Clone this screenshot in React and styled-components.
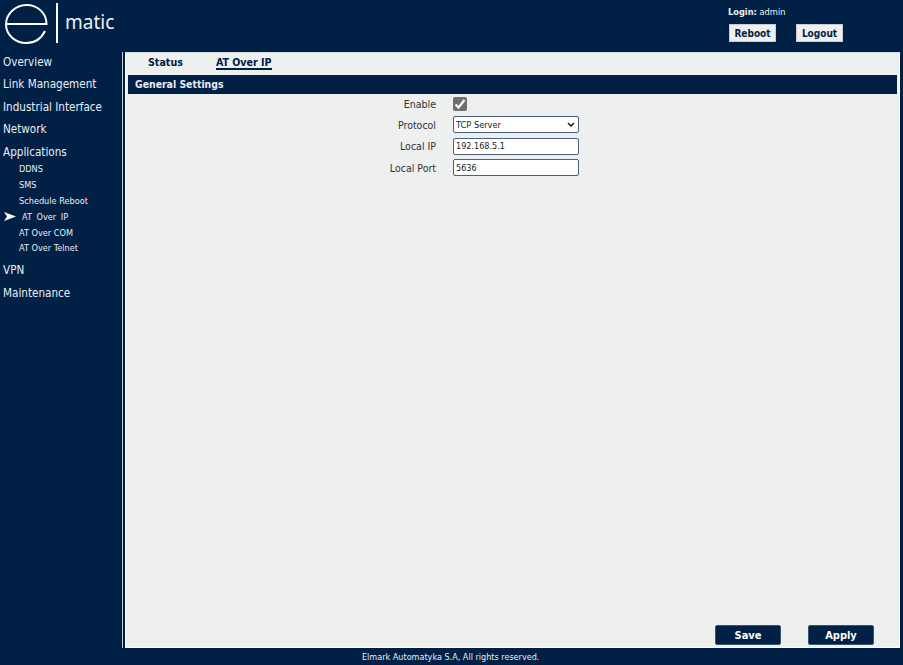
import styled, { createGlobalStyle } from "styled-components"

const Global = createGlobalStyle`
    html, body {
        margin: 0;
        padding: 0;
        height: 100%;
        background: #002145;
        font-family: "DejaVu Sans", "Noto Sans", sans-serif;
        font-stretch: condensed;
    }
    #root {
        height: 100%;
    }
`

const menuTop = ["Overview", "Link Management", "Industrial Interface", "Network", "Applications"]
const subMenu = ["DDNS", "SMS", "Schedule Reboot", "AT Over IP", "AT Over COM", "AT Over Telnet"]
const fields = [
    { label: "Local IP", value: "192.168.5.1" },
    { label: "Local Port", value: "5636" },
]
const chevron = "url(\"data:image/svg+xml,%3Csvg xmlns='http://www.w3.org/2000/svg' width='8' height='5'%3E%3Cpath d='M1 1L4 4L7 1' fill='none' stroke='%23222' stroke-width='1.6'/%3E%3C/svg%3E\")"

export default function App() {
    return (
        <Page>
            <Global />
            <Header>
                <LogoBox>
                    <svg width="58" height="46" viewBox="0 0 58 46" fill="none" stroke="#fff" strokeWidth="2">
                        <path d="M6 24H46.5C46.5 13 37.5 5 26.5 5C15.5 5 6 14 6 24.5C6 35 15.5 43 26.5 43C34 43 41 39 45 31" />
                        <path d="M57 3V43" />
                    </svg>
                    <LogoText>matic</LogoText>
                </LogoBox>
                <UserBox>
                    <LoginLine><b>Login:</b> admin</LoginLine>
                    <TopButtons>
                        <TopButton>Reboot</TopButton>
                        <TopButton>Logout</TopButton>
                    </TopButtons>
                </UserBox>
            </Header>
            <Main>
                <Sidebar>
                    {menuTop.map((m) => <MenuItem key={m}>{m}</MenuItem>)}
                    <SubList>
                        {subMenu.map((s) => (
                            <SubItem key={s} $active={s === "AT Over IP"}>
                                {s === "AT Over IP" && (
                                    <Arrow width="12" height="9" viewBox="0 0 12 9">
                                        <path d="M0 0L12 4.5L0 9L3 4.5Z" fill="#fff" />
                                    </Arrow>
                                )}
                                {s}
                            </SubItem>
                        ))}
                    </SubList>
                    <MenuItem>VPN</MenuItem>
                    <MenuItem>Maintenance</MenuItem>
                </Sidebar>
                <Panel>
                    <Tabs>
                        <Tab>Status</Tab>
                        <Tab $active>AT Over IP</Tab>
                    </Tabs>
                    <SectionBar>General Settings</SectionBar>
                    <Form>
                        <Row>
                            <Label>Enable</Label>
                            <CheckBox>
                                <svg width="14" height="14" viewBox="0 0 14 14" fill="none" stroke="#fff" strokeWidth="2.2">
                                    <path d="M2.5 7.5L5.5 10.5L11.5 3" />
                                </svg>
                            </CheckBox>
                        </Row>
                        <Row>
                            <Label>Protocol</Label>
                            <Select defaultValue="TCP Server">
                                <option>TCP Server</option>
                                <option>TCP Client</option>
                                <option>UDP</option>
                            </Select>
                        </Row>
                        {fields.map((f) => (
                            <Row key={f.label}>
                                <Label>{f.label}</Label>
                                <Input defaultValue={f.value} />
                            </Row>
                        ))}
                    </Form>
                    <Actions>
                        <ActionButton>Save</ActionButton>
                        <ActionButton>Apply</ActionButton>
                    </Actions>
                </Panel>
            </Main>
            <Footer>Elmark Automatyka S.A, All rights reserved.</Footer>
        </Page>
    )
}

const Page = styled.div`
    width: 903px;
    height: 665px;
    display: flex;
    flex-direction: column;
    background: #002145;
    overflow: hidden;
`
const Header = styled.div`
    height: 52px;
    flex: none;
    display: flex;
    justify-content: space-between;
`
const LogoBox = styled.div`
    display: flex;
    align-items: flex-start;
    svg {
        flex: none;
    }
`
const LogoText = styled.div`
    margin: 8px 0 0 7px;
    color: #eef1f4;
    font-family: "Noto Sans", sans-serif;
    font-size: 19px;
    line-height: 28px;
`
const UserBox = styled.div`
    width: 175px;
    color: #eef1f4;
    font-size: 9.2px;
`
const LoginLine = styled.div`
    margin-top: 5px;
    line-height: 13px;
    b {
        font-weight: 700;
    }
`
const TopButtons = styled.div`
    display: flex;
    gap: 20px;
    margin-top: 6px;
    margin-left: 1px;
`
const TopButton = styled.button`
    width: 47px;
    height: 18px;
    padding: 0;
    border: 1px solid #c8ccd2;
    background: #f0f0f0;
    color: #002145;
    font-family: inherit;
    font-stretch: condensed;
    font-size: 10px;
    font-weight: 700;
    cursor: pointer;
`
const Main = styled.div`
    flex: 1;
    display: flex;
    min-height: 0;
`
const Sidebar = styled.div`
    width: 123px;
    flex: none;
    box-sizing: border-box;
    padding-left: 3px;
    border-right: 1px solid #c5ccd6;
`
const MenuItem = styled.div`
    height: 22.4px;
    line-height: 20px;
    color: #e9edf2;
    font-size: 11.6px;
`
const SubList = styled.div`
    margin: -3px 0 4px;
`
const SubItem = styled.div`
    position: relative;
    height: 15.9px;
    line-height: 16px;
    padding-left: ${(p) => (p.$active ? "19px" : "16px")};
    color: #e9edf2;
    font-size: 9.1px;
    word-spacing: ${(p) => (p.$active ? "2px" : "0")};
`
const Arrow = styled.svg`
    position: absolute;
    left: 1px;
    top: 3px;
`
const Panel = styled.div`
    width: 775px;
    margin-left: 2px;
    box-sizing: border-box;
    padding: 0 2px;
    display: flex;
    flex-direction: column;
    background: #eeefef;
    border: 1px solid #fff;
    border-top-color: #d5d9de;
`
const Tabs = styled.div`
    height: 22px;
    flex: none;
    display: flex;
    gap: 33px;
    padding-left: 20px;
`
const Tab = styled.div`
    height: 13px;
    margin-top: 2px;
    line-height: 15px;
    color: #002145;
    font-size: 10.6px;
    font-weight: 700;
    border-bottom: ${(p) => (p.$active ? "2px solid #002145" : "none")};
`
const SectionBar = styled.div`
    height: 19px;
    flex: none;
    box-sizing: border-box;
    padding-left: 7px;
    line-height: 19px;
    background: #002145;
    color: #e9edf2;
    font-size: 10.4px;
    font-weight: 700;
`
const Form = styled.div`
    flex: 1;
    margin-top: -1px;
`
const Row = styled.div`
    height: 21.3px;
    display: flex;
    align-items: center;
    gap: 17px;
`
const Label = styled.div`
    width: 308px;
    text-align: right;
    color: #333;
    font-size: 10.5px;
`
const CheckBox = styled.div`
    width: 14px;
    height: 14px;
    border-radius: 2px;
    background: #6f6f6f;
    svg {
        display: block;
    }
`
const Select = styled.select`
    appearance: none;
    width: 126px;
    height: 17px;
    box-sizing: border-box;
    padding: 0 2px;
    border: 1px solid #4c6078;
    border-radius: 2px;
    background: #fff ${chevron} no-repeat right 3px center;
    color: #222;
    font-family: inherit;
    font-stretch: condensed;
    font-size: 9.2px;
`
const Input = styled.input`
    width: 126px;
    height: 17px;
    box-sizing: border-box;
    padding: 0 2px;
    border: 1px solid #4c6078;
    border-radius: 2px;
    background: #fff;
    color: #222;
    font-family: inherit;
    font-stretch: condensed;
    font-size: 9px;
`
const Actions = styled.div`
    display: flex;
    justify-content: flex-end;
    gap: 27px;
    padding: 0 23px 2px 0;
`
const ActionButton = styled.button`
    width: 66px;
    height: 20px;
    padding: 0;
    border: 1px solid #3d5470;
    border-radius: 2px;
    background: #002145;
    color: #fff;
    font-family: inherit;
    font-stretch: condensed;
    font-size: 11px;
    font-weight: 700;
    cursor: pointer;
`
const Footer = styled.div`
    height: 17px;
    flex: none;
    padding-left: 362px;
    line-height: 19px;
    color: #e9edf2;
    font-size: 9px;
`
